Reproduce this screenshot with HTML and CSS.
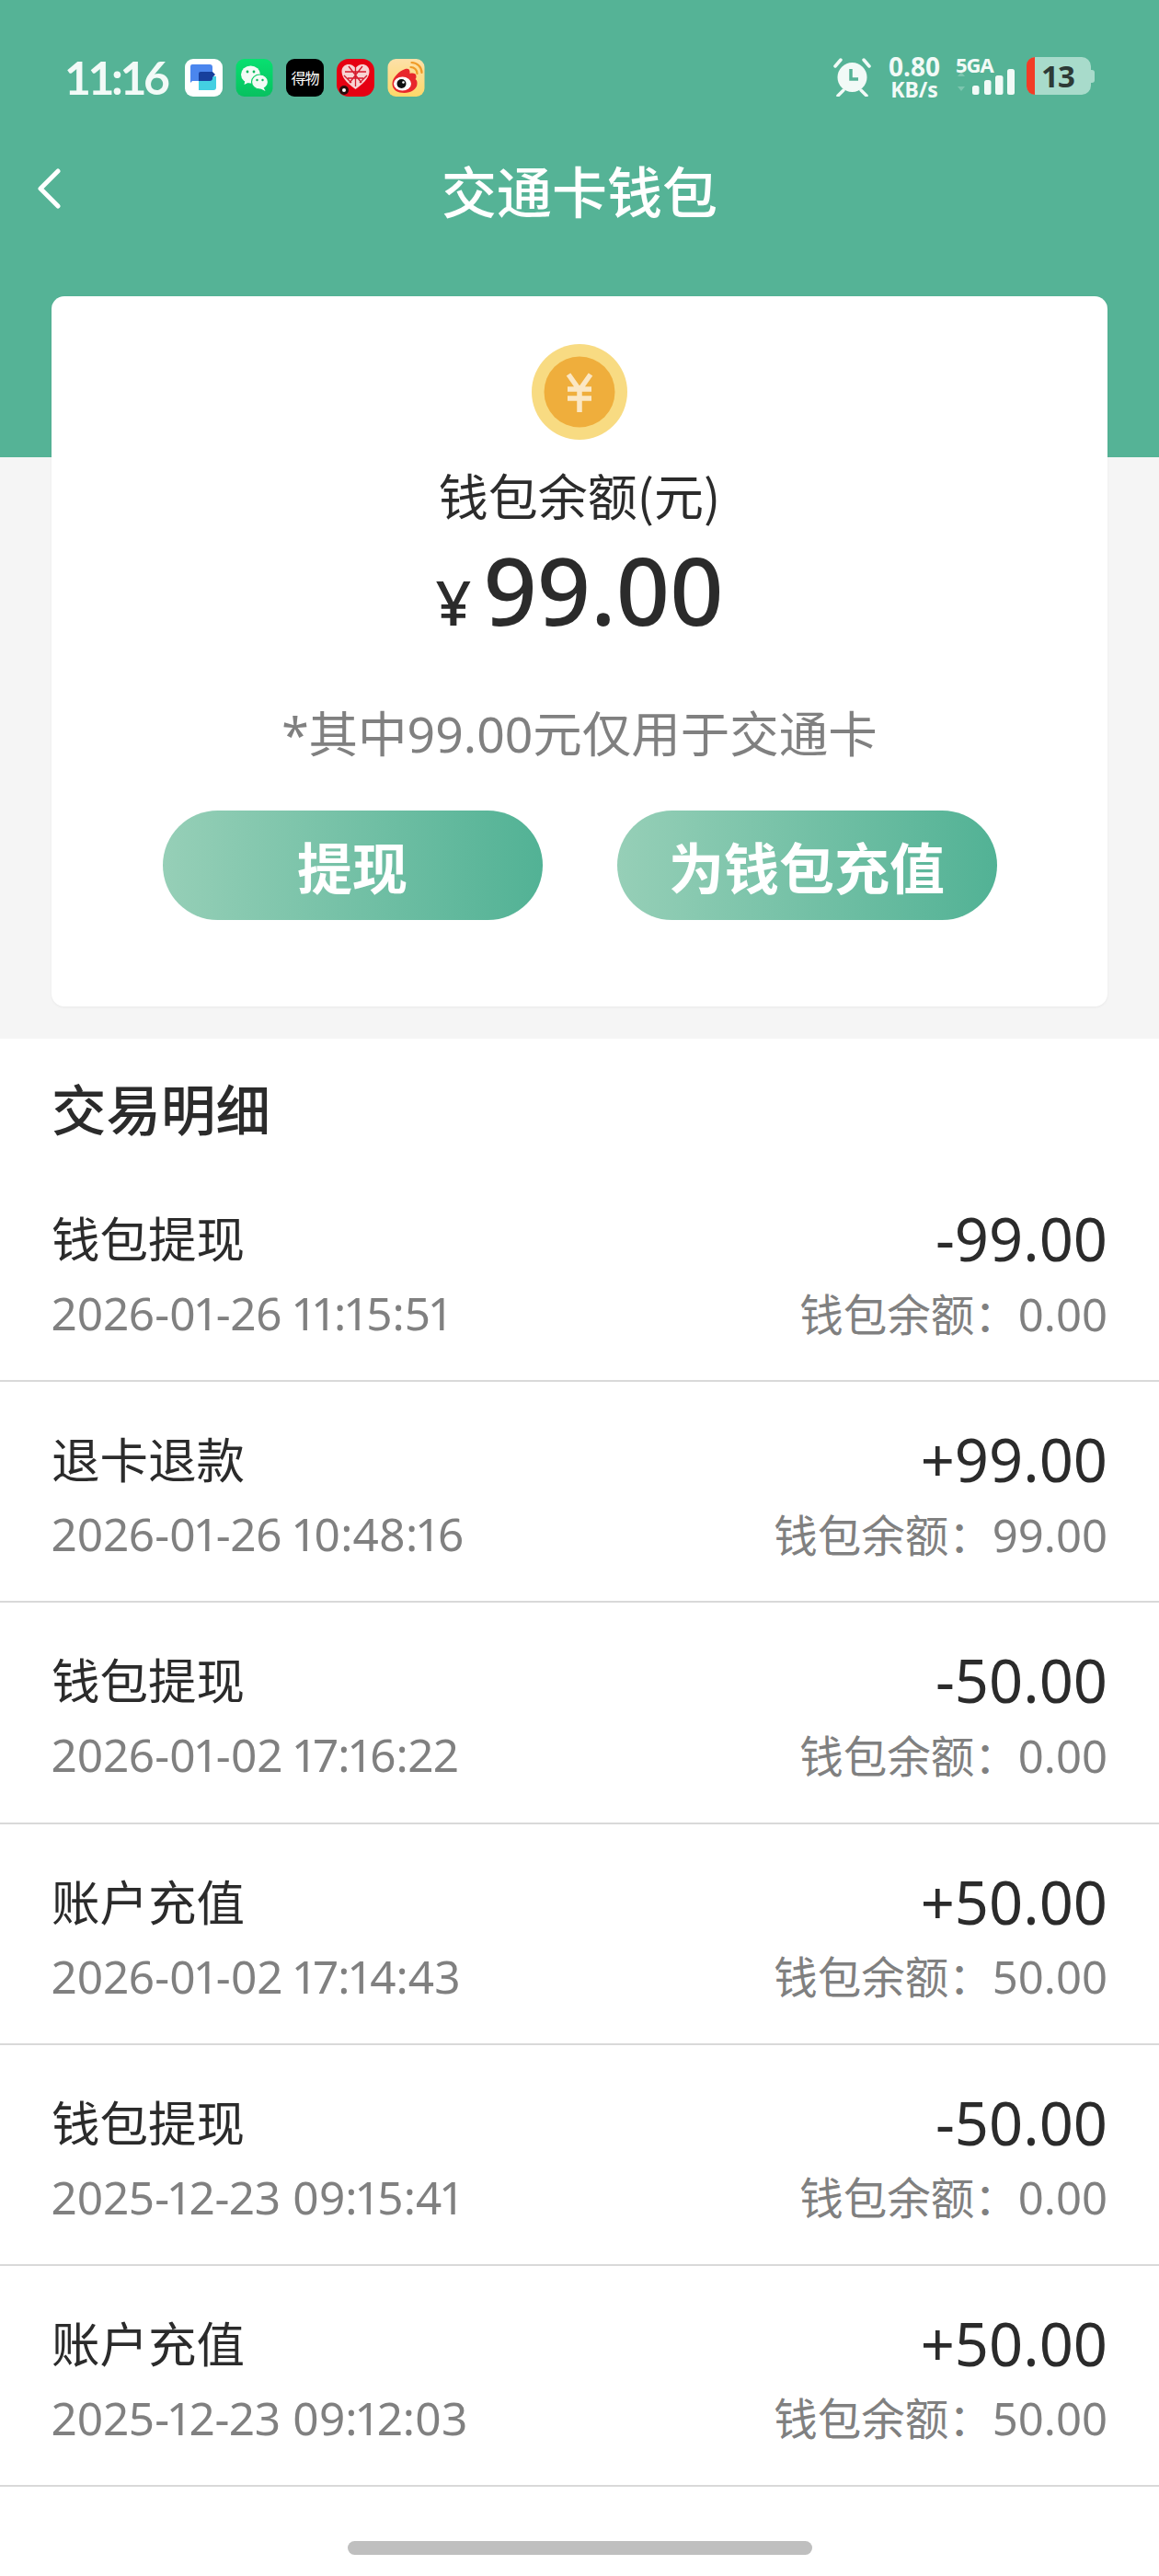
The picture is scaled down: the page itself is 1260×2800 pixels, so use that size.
FILE: index.html
```html
<!DOCTYPE html>
<html lang="zh-CN">
<head>
<meta charset="utf-8">
<title>交通卡钱包</title>
<link rel="stylesheet" href="styles.css">
</head>
<body>
<div class="page">
  <header class="header">
    <div class="status">
      <div class="status-left">
        <span class="time">11:16</span>
        <svg class="app" viewBox="0 0 41 41"><rect width="41" height="41" rx="9" fill="#fff"/><path d="M6 8a2 2 0 0 1 2-2h19a3 3 0 0 1 3 3v15H8l-2 2z" fill="#4b86ee"/><path d="M15 19h19v12a3 3 0 0 1-3 3H15z" fill="#43cfe2"/><path d="M15 16a2 2 0 0 1 2-2h13l3 3-3 3v2a3 3 0 0 1-3 2H15z" fill="#173f9c"/></svg>
        <svg class="app" viewBox="0 0 40 41"><defs><linearGradient id="wx" x1="0" y1="0" x2="0" y2="1"><stop offset="0" stop-color="#08e070"/><stop offset="1" stop-color="#07c160"/></linearGradient></defs><rect width="40" height="41" rx="9" fill="url(#wx)"/><ellipse cx="16" cy="17" rx="10.500" ry="9.500" fill="#f3fbf6"/><path d="M10 23l-1 5 6-3z" fill="#f3fbf6"/><ellipse cx="26" cy="25" rx="9" ry="8" fill="#f3fbf6" stroke="#08cf66" stroke-width="1.200"/><path d="M30 31l2 4-6-3z" fill="#f3fbf6"/><circle cx="12.500" cy="14" r="1.400" fill="#0bb85d"/><circle cx="19.500" cy="14" r="1.400" fill="#0bb85d"/><circle cx="23" cy="23" r="1.200" fill="#0bb85d"/><circle cx="29" cy="23" r="1.200" fill="#0bb85d"/></svg>
        <span class="app app-dewu">得物</span>
        <svg class="app" viewBox="0 0 41 41"><rect width="41" height="41" rx="13" fill="#e60012"/><path d="M20.500 33C9 25 5.500 19 5.500 13.500 5.500 8 10 5.500 14 6c3 .3 5.200 2 6.500 4.500C21.800 8 24 6.300 27 6c4-.5 8.500 2 8.500 7.500C35.500 19 32 25 20.500 33z" fill="#f8d4d4"/><path d="M9 14h23M12 21h17M20.500 10v20M13 8l14 18M28 8L14 26M8 18l8 8M33 18l-8 8" stroke="#d51a2c" stroke-width="1.300" fill="none"/><circle cx="8" cy="34" r="5" fill="#2b0b0b"/><circle cx="8" cy="34" r="2" fill="#fff"/></svg>
        <svg class="app" viewBox="0 0 40 41"><defs><linearGradient id="wb" x1="0" y1="0" x2="0" y2="1"><stop offset="0" stop-color="#fde0a8"/><stop offset="1" stop-color="#fdd869"/></linearGradient></defs><rect width="40" height="41" rx="9" fill="url(#wb)"/><path d="M5 27c0-7 8-14 14-16 3-1 5 0 5 3 0 1 0 2 0 2 3-1 7-.5 7 3 0 1 0 2-1 3 2 1 2 3 2 5 0 6-7 10-14 10-7 0-13-3-13-10z" fill="#e8272c"/><ellipse cx="16" cy="27" rx="9.500" ry="7.500" fill="#fff"/><circle cx="15" cy="27" r="5" fill="#111"/><circle cx="17" cy="25.500" r="1.300" fill="#fff"/><path d="M25 9c4 0 7 3 7 7M26 4c6 0 11 5 11 11" stroke="#f09a26" stroke-width="2.200" fill="none" stroke-linecap="round"/></svg>
      </div>
      <div class="status-right">
        <svg class="alarm" viewBox="0 0 41 43"><circle cx="20.500" cy="22" r="16" fill="#f2faf7"/><path d="M2 10l6-7M39 10l-6-7M5 42l6-6M36 42l-6-6" stroke="#f2faf7" stroke-width="3.500" stroke-linecap="round"/><path d="M19 13v11h8" stroke="#55b396" stroke-width="3.500" fill="none"/></svg>
        <div class="speed"><span class="speed-num">0.80</span><span class="speed-unit">KB/s</span></div>
        <div class="net">
          <span class="net-label">5GA</span>
          <svg class="signal" viewBox="0 0 65 28"><path d="M2 8l4-5 4 5zM2 19l4 5 4-5z" fill="#7cc5ae"/><rect x="18" y="18" width="7.500" height="10" rx="2.500" fill="#f2faf7"/><rect x="31" y="12" width="7.500" height="16" rx="2.500" fill="#f2faf7"/><rect x="43" y="7" width="8.500" height="21" rx="2.500" fill="#f2faf7"/><rect x="56" y="0" width="8" height="28" rx="2.500" fill="#f2faf7"/></svg>
        </div>
        <div class="battery"><div class="battery-body"><span class="battery-low"></span><span class="battery-num">13</span></div><span class="battery-tip"></span></div>
      </div>
    </div>
    <nav class="nav">
      <svg class="back" viewBox="0 0 26 44"><path d="M23 3L4 22l19 19" stroke="#fff" stroke-width="5" fill="none" stroke-linecap="round" stroke-linejoin="round"/></svg>
      <h1 class="nav-title">交通卡钱包</h1>
    </nav>
  </header>

  <section class="card">
    <svg class="coin" viewBox="0 0 104 104"><circle cx="52" cy="52" r="52" fill="#f8db82"/><circle cx="52" cy="52" r="38.500" fill="#efae3c"/><path d="M40 33l12 17 12-17M39 49h26M39 59h26M52 49v25" stroke="#fbe7c4" stroke-width="5.500" fill="none"/></svg>
    <div class="balance-label">钱包余额(元)</div>
    <div class="balance"><span class="balance-sign">¥</span><span class="balance-num">99.00</span></div>
    <div class="note">*其中99.00元仅用于交通卡</div>
    <div class="actions">
      <button class="btn">提现</button>
      <button class="btn">为钱包充值</button>
    </div>
  </section>

  <section class="list">
    <h2 class="list-title">交易明细</h2>
    <div class="row"><div class="row-name">钱包提现</div><div class="row-amount">-99.00</div><div class="row-date">2026-01-26 11:15:51</div><div class="row-left">钱包余额<span class="row-colon">：</span><span class="row-left-num">0.00</span></div></div>
    <div class="row"><div class="row-name">退卡退款</div><div class="row-amount">+99.00</div><div class="row-date">2026-01-26 10:48:16</div><div class="row-left">钱包余额<span class="row-colon">：</span><span class="row-left-num">99.00</span></div></div>
    <div class="row"><div class="row-name">钱包提现</div><div class="row-amount">-50.00</div><div class="row-date">2026-01-02 17:16:22</div><div class="row-left">钱包余额<span class="row-colon">：</span><span class="row-left-num">0.00</span></div></div>
    <div class="row"><div class="row-name">账户充值</div><div class="row-amount">+50.00</div><div class="row-date">2026-01-02 17:14:43</div><div class="row-left">钱包余额<span class="row-colon">：</span><span class="row-left-num">50.00</span></div></div>
    <div class="row"><div class="row-name">钱包提现</div><div class="row-amount">-50.00</div><div class="row-date">2025-12-23 09:15:41</div><div class="row-left">钱包余额<span class="row-colon">：</span><span class="row-left-num">0.00</span></div></div>
    <div class="row"><div class="row-name">账户充值</div><div class="row-amount">+50.00</div><div class="row-date">2025-12-23 09:12:03</div><div class="row-left">钱包余额<span class="row-colon">：</span><span class="row-left-num">50.00</span></div></div>
    <div class="home"><span class="home-bar"></span></div>
  </section>
</div>
</body>
</html>
```
FILE: styles.css
```css
* { box-sizing: border-box; }
html, body { margin: 0; padding: 0; background: #fff; }
body { font-family: "Noto Sans", "Noto Sans CJK SC", sans-serif; color: #2b2b2b; }
.page { width: 1260px; height: 2800px; background: #f5f5f5; overflow: hidden; display: flex; flex-direction: column; }

.header { height: 497px; flex: none; background: #55b396; padding-top: 62px; }
.status { display: flex; justify-content: space-between; padding: 0 70px 0 70px; height: 44px; }
.status-left { display: flex; align-items: center; }
.time { font: 700 50px/44px "Lato", sans-serif; letter-spacing: -3.500px; color: #f2faf7; width: 131px; }
.app { width: 41px; height: 41px; margin-right: 14px; display: block; }
.app-dewu { background: #000; color: #fff; border-radius: 9px; font: 400 16px/41px "Noto Sans CJK SC", sans-serif; text-align: center; letter-spacing: -1px; }
.status-right { display: flex; align-items: flex-start; }
.alarm { width: 41px; height: 43px; margin-right: 18px; }
.speed { display: flex; flex-direction: column; align-items: center; width: 58px; margin: -3px 16px 0 0; color: #f2faf7; font-weight: 700; }
.speed-num { font-size: 28px; line-height: 26px; }
.speed-unit { font-size: 23px; line-height: 20px; margin-top: 2px; }
.net { position: relative; width: 65px; height: 42px; margin-right: 12px; color: #f2faf7; }
.net-label { position: absolute; left: 0; top: -3px; font: 700 22px/22px "Noto Sans", sans-serif; letter-spacing: -1px; }
.signal { display: block; width: 65px; height: 28px; margin-top: 13px; }
.battery { display: flex; align-items: center; width: 74px; height: 41px; }
.battery-body { position: relative; width: 70px; height: 41px; background: #a8dbcb; border-radius: 10px; padding-left: 16px; }
.battery-low { position: absolute; left: 0; top: 0; bottom: 0; width: 9px; background: #f23c26; border-radius: 9px 0 0 9px; }
.battery-num { display: block; font: 700 33px/41px "Noto Sans", sans-serif; color: #2d3a36; letter-spacing: -1px; }
.battery-tip { width: 4px; height: 14px; background: #a8dbcb; border-radius: 0 3px 3px 0; }

.nav { position: relative; height: 100px; margin-top: 50px; display: flex; align-items: center; justify-content: center; }
.back { position: absolute; left: 40px; top: 27px; width: 26px; height: 44px; }
.nav-title { margin: 0; font: 500 60px/100px "Noto Sans CJK SC", sans-serif; color: #fff; }

.card { flex: none; width: 1148px; height: 772px; margin: -175px auto 35px; background: #fff; border-radius: 14px; box-shadow: 0 1px 3px rgba(0,0,0,.05); display: flex; flex-direction: column; align-items: center; padding-top: 52px; }
.coin { width: 104px; height: 104px; display: block; flex: none; }
.balance-label { margin-top: 25px; font: 400 54px/70px "Noto Sans CJK SC", sans-serif; color: #2b2b2b; }
.balance { display: flex; align-items: baseline; margin-top: 13px; height: 110px; }
.balance-sign { font: 500 68px/110px "Noto Sans", sans-serif; margin-right: 13px; }
.balance-num { font: 500 102px/110px "Noto Sans", sans-serif; }
.note { margin-top: 67px; font: 400 53.500px/70px "Noto Sans", "Noto Sans CJK SC", sans-serif; color: #808080; }
.actions { display: flex; gap: 81px; margin-top: 48px; }
.btn { width: 413px; height: 119px; border: 0; border-radius: 60px; background: linear-gradient(90deg, #96cfb7, #52b295); color: #fff; font: 700 60px/119px "Noto Sans CJK SC", sans-serif; padding: 0 0 2px; }

.list { flex: 1; background: #fff; padding-top: 34px; }
.list-title { margin: 0; padding: 0 56px; height: 99px; font: 500 59.500px/80px "Noto Sans CJK SC", sans-serif; color: #2b2b2b; }
.row { height: 240.200px; padding: 40px 56px 0; border-bottom: 2px solid #d9d9d9; display: grid; grid-template-columns: 1fr auto; grid-template-rows: 84px 70px; row-gap: 6px; align-items: center; }
.row-name { font: 400 52.500px/84px "Noto Sans CJK SC", sans-serif; color: #2b2b2b; }
.row-amount { font: 400 65px/84px "Noto Sans", sans-serif; color: #2b2b2b; text-align: right; margin-top: 4px; }
.row-date { font: 400 49.500px/70px "Noto Sans", sans-serif; font-variant-numeric: proportional-nums; color: #808080; }
.row-left { font: 400 47.500px/70px "Noto Sans CJK SC", sans-serif; color: #808080; text-align: right; }
.row-colon { font-family: "Noto Sans CJK TC", sans-serif; }
.row-left-num { font: 400 49px/70px "Noto Sans", sans-serif; }

.home { display: flex; justify-content: center; margin-top: 59px; }
.home-bar { width: 505px; height: 15px; border-radius: 8px; background: #bfbfbf; display: block; }
```
